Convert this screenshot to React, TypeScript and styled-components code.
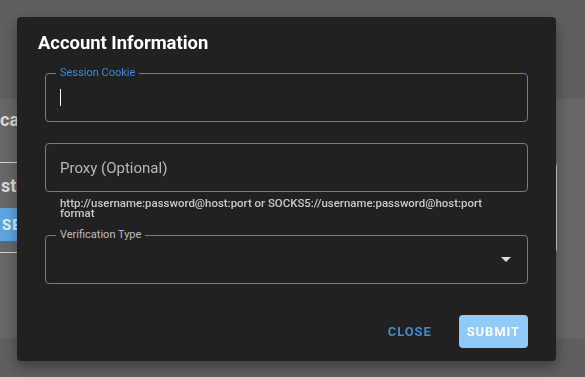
import React from "react";
import styled, { createGlobalStyle } from "styled-components";

const GlobalStyle = createGlobalStyle`
  html, body {
    margin: 0;
    padding: 0;
    background: #5f5f5f;
    font-family: Roboto, "Liberation Sans", sans-serif;
    overflow: hidden;
  }
`;

/* ---------- page behind the dialog ---------- */

const Page = styled.div`
  height: 377px;
  display: flex;
  flex-direction: column;
  background: #5f5f5f;
  overflow: hidden;
`;

const TopBand = styled.div`
  height: 99px;
  flex-shrink: 0;
`;

const Panel = styled.div`
  height: 239px;
  background: #676767;
  display: flex;
  flex-direction: column;
`;

const PanelHeading = styled.h2`
  margin: 11px 0 0;
  font-size: 18px;
  line-height: 20px;
  font-weight: 700;
  color: #dcdcdc;
  white-space: nowrap;
`;

const FormBox = styled.div`
  margin: 32px 0 0 -20px;
  width: 577px;
  height: 91px;
  box-sizing: border-box;
  border: 1px solid #d4d4d4;
  border-radius: 4px;
  padding-left: 20px;
  display: flex;
  flex-direction: column;
`;

const BoxLabel = styled.div`
  margin-top: 13px;
  font-size: 18px;
  line-height: 20px;
  font-weight: 700;
  color: #dcdcdc;
  white-space: nowrap;
`;

const PageButton = styled.div`
  margin: 12px 0 0 -30px;
  width: 120px;
  height: 33px;
  box-sizing: border-box;
  padding-left: 31px;
  background: #5ea6e2;
  border-radius: 4px;
  color: #e6f1fb;
  font-weight: 700;
  font-size: 15px;
  letter-spacing: 1px;
  display: flex;
  align-items: center;
`;

/* ---------- dialog ---------- */

const Overlay = styled.div`
  position: fixed;
  inset: 0;
  padding: 17px 0 0 17px;
  display: flex;
  align-items: flex-start;
`;

const Dialog = styled.div`
  width: 539px;
  height: 344px;
  box-sizing: border-box;
  background: #212121;
  border-radius: 4px;
  box-shadow: 0 6px 14px rgba(0, 0, 0, 0.35);
  display: flex;
  flex-direction: column;
`;

const Title = styled.h1`
  margin: 16px 0 0;
  padding: 0 21px;
  font-size: 18.4px;
  line-height: 20px;
  font-weight: 700;
  color: #ffffff;
`;

const Content = styled.div`
  padding: 0 28px;
  display: flex;
  flex-direction: column;
`;

const Field = styled.div<{ $focused?: boolean; $top: number }>`
  position: relative;
  margin-top: ${(p) => p.$top}px;
  height: 49px;
  box-sizing: border-box;
  border: 1px solid ${(p) => (p.$focused ? "#3a8cd8" : "#7a7a7a")};
  border-radius: 4px;
  padding: 0 16px 0 14px;
  display: flex;
  align-items: center;
`;

const FieldLabel = styled.span<{ $focused?: boolean }>`
  position: absolute;
  top: -8px;
  left: 10px;
  padding: 0 4px;
  background: #212121;
  font-size: 11px;
  line-height: 14px;
  color: ${(p) => (p.$focused ? "#3a8cd8" : "#bdbdbd")};
`;

const Caret = styled.span`
  width: 1px;
  height: 17px;
  background: #ffffff;
`;

const Placeholder = styled.span`
  font-size: 15px;
  color: #b8b8b8;
`;

const HelperText = styled.p`
  margin: 6px 0 0;
  padding-left: 15px;
  max-width: 450px;
  font-size: 11.45px;
  line-height: 10px;
  font-weight: 500;
  color: #cacaca;
`;

const SelectArrow = styled.svg`
  margin-left: auto;
  width: 10px;
  height: 5px;
`;

const Actions = styled.div`
  margin-top: 31px;
  padding: 0 28px;
  display: flex;
  justify-content: flex-end;
  align-items: center;
  gap: 19px;
`;

const Button = styled.button<{ $variant: "text" | "contained" }>`
  height: 33px;
  border: none;
  border-radius: 4px;
  font-family: Roboto, "Liberation Sans", sans-serif;
  font-size: 13px;
  font-weight: 700;
  letter-spacing: 0.9px;
  text-transform: uppercase;
  cursor: pointer;
  padding: 0 8px;
  background: ${(p) => (p.$variant === "contained" ? "#90caf9" : "transparent")};
  color: ${(p) => (p.$variant === "contained" ? "#ffffff" : "#3a8cd8")};
`;

const App: React.FC = () => {
  return (
    <>
      <GlobalStyle />
      <Page>
        <TopBand />
        <Panel>
          <PanelHeading>cation Settings</PanelHeading>
          <FormBox>
            <BoxLabel>st</BoxLabel>
            <PageButton>SE</PageButton>
          </FormBox>
        </Panel>
      </Page>

      <Overlay>
        <Dialog>
          <Title>Account Information</Title>
          <Content>
            <Field $focused $top={20}>
              <FieldLabel $focused>Session Cookie</FieldLabel>
              <Caret />
            </Field>
            <Field $top={21}>
              <Placeholder>Proxy (Optional)</Placeholder>
            </Field>
            <HelperText>
              http://username:password@host:port or SOCKS5://username:password@host:port format
            </HelperText>
            <Field $top={17}>
              <FieldLabel>Verification Type</FieldLabel>
              <SelectArrow viewBox="0 0 10 5">
                <path d="M0 0 L10 0 L5 5 Z" fill="#dddddd" />
              </SelectArrow>
            </Field>
          </Content>
          <Actions>
            <Button $variant="text">Close</Button>
            <Button $variant="contained">Submit</Button>
          </Actions>
        </Dialog>
      </Overlay>
    </>
  );
};

export default App;
